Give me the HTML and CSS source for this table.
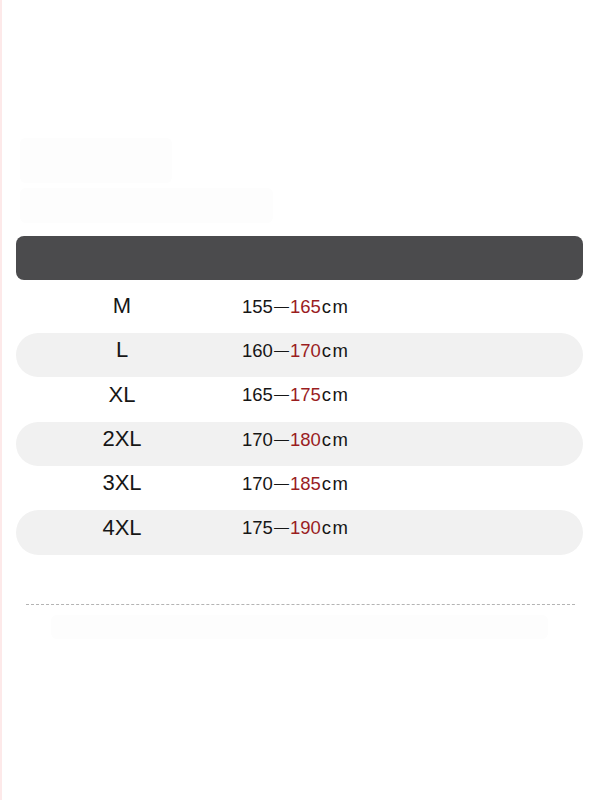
FILE: index.html
```html
<!DOCTYPE html>
<html lang="zh">
<head>
<meta charset="utf-8">
<title>Size chart</title>
<link rel="stylesheet" href="styles.css">
</head>
<body>
<div class="page">
  <div class="ghost ghost-a"></div>
  <div class="ghost ghost-b"></div>
  <div class="header"></div>
  <div class="table">
    <div class="row"><div class="size">M</div><div class="range">155<span class="dash">—</span><span class="hi">165</span><span class="unit">cm</span></div><div class="extra"></div></div>
    <div class="row alt"><div class="size">L</div><div class="range">160<span class="dash">—</span><span class="hi">170</span><span class="unit">cm</span></div><div class="extra"></div></div>
    <div class="row tall"><div class="size">XL</div><div class="range">165<span class="dash">—</span><span class="hi">175</span><span class="unit">cm</span></div><div class="extra"></div></div>
    <div class="row alt"><div class="size">2XL</div><div class="range">170<span class="dash">—</span><span class="hi">180</span><span class="unit">cm</span></div><div class="extra"></div></div>
    <div class="row"><div class="size">3XL</div><div class="range">170<span class="dash">—</span><span class="hi">185</span><span class="unit">cm</span></div><div class="extra"></div></div>
    <div class="row alt tall"><div class="size">4XL</div><div class="range">175<span class="dash">—</span><span class="hi">190</span><span class="unit">cm</span></div><div class="extra"></div></div>
  </div>
  <div class="divider"></div>
  <div class="ghost ghost-c"></div>
</div>
</body>
</html>
```
FILE: styles.css
```css
html, body {
  margin: 0;
  padding: 0;
  background: #ffffff;
}
body {
  width: 599px;
  min-height: 800px;
  box-sizing: border-box;
  border-left: 2px solid #fde9e9;
  font-family: "Liberation Sans", Arial, sans-serif;
  color: #161616;
}
.page {
  padding: 138px 16px 0 14px;
}
.ghost {
  background: #fdfdfd;
  border-radius: 6px;
}
.ghost-a {
  margin-left: 4px;
  width: 152px;
  height: 45px;
}
.ghost-b {
  margin-left: 4px;
  margin-top: 5px;
  width: 253px;
  height: 35px;
}
.header {
  margin-top: 13px;
  height: 44px;
  background: #4b4b4d;
  border-radius: 8px;
}
.table {
  margin-top: 9px;
  display: flex;
  flex-direction: column;
}
.row {
  display: grid;
  grid-template-columns: 212px 1fr 150px;
  align-items: center;
  height: 44px;
  box-sizing: border-box;
  padding-bottom: 10px;
  border-radius: 23px;
}
.row.tall {
  height: 45px;
}
.row.alt {
  background: #f1f1f1;
}
.size {
  text-align: center;
  font-size: 22px;
  line-height: 22px;
}
.range {
  padding-left: 14px;
  font-size: 18.5px;
  line-height: 20px;
  white-space: nowrap;
}
.dash {
  font-size: 15px;
  margin: 0 1px;
  vertical-align: 2px;
}
.hi {
  color: #9a1d1f;
}
.unit {
  letter-spacing: 1.5px;
  margin-left: 1px;
}
.divider {
  margin: 49px 8px 0 10px;
  border-top: 1px dashed #b4b4b4;
}
.ghost-c {
  margin: 10px 35px 0 35px;
  height: 24px;
}
```
